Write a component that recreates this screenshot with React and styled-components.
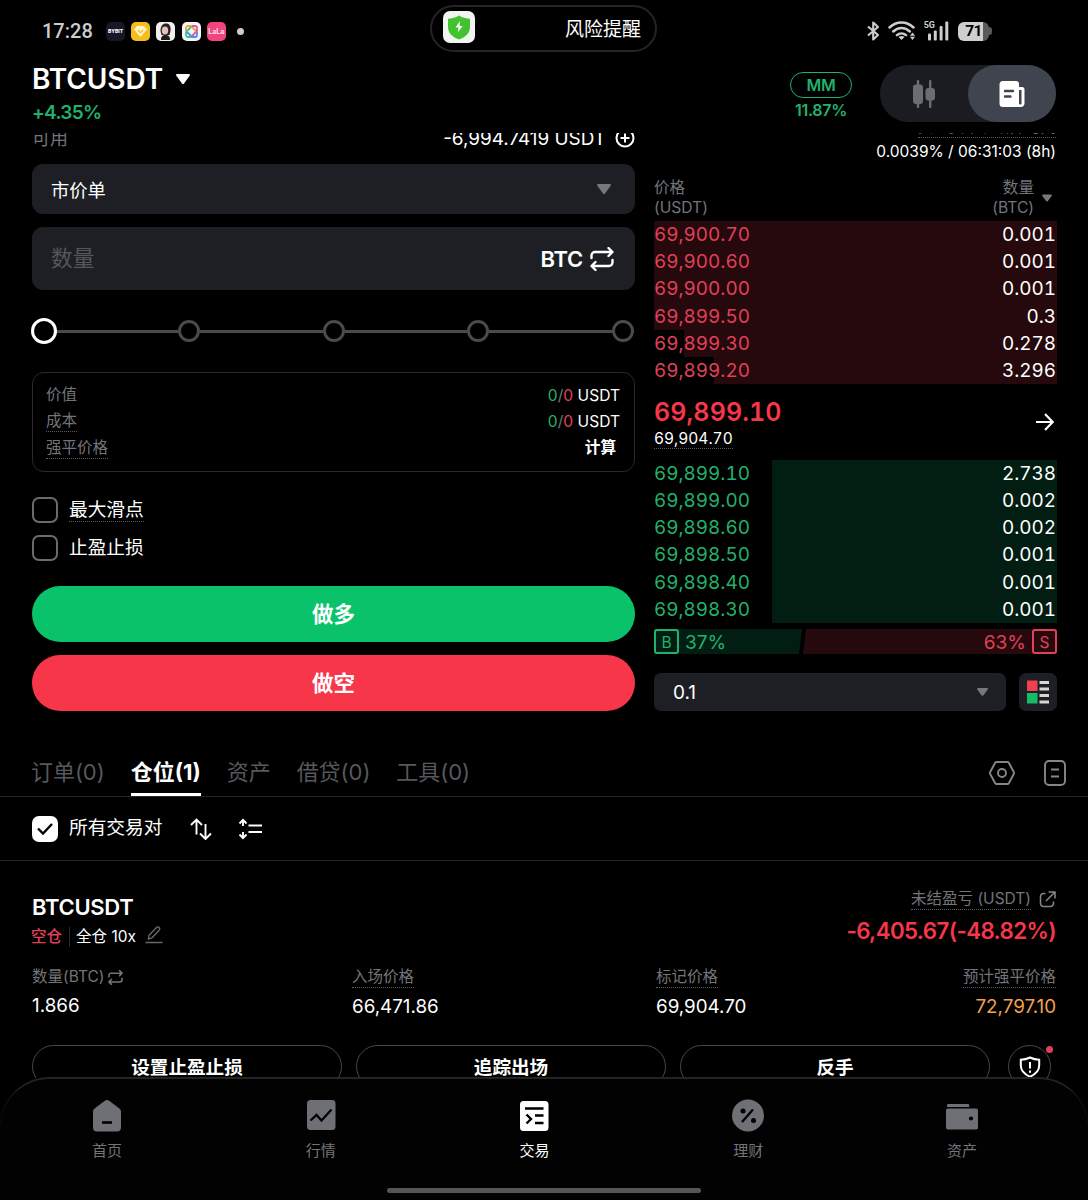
import React from "react";
import styled, { createGlobalStyle } from "styled-components";

const colors = {
  green: "#20b26c",
  buy: "#0ac26a",
  sell: "#f7364a",
  rose: "#e0405a",
  orange: "#f5a04a",
  grey: "#71757a",
  dim: "#55585d",
  field: "#1e1f24",
  line: "#242426",
  askBg: "#25090c",
  bidBg: "#021d11",
};

const GlobalStyle = createGlobalStyle`
  * {
    box-sizing: border-box;
  }

  body {
    margin: 0;
    background: #000;
    color: #fff;
    font-family: Inter, "Noto Sans CJK SC", sans-serif;
  }

  svg {
    display: block;
    flex: none;
  }
`;

const Screen = styled.div`
  width: 1088px;
  height: 1200px;
  display: flex;
  overflow: hidden;
  background: #000;
  flex-direction: column;
`;

/* status bar */

const StatusBar = styled.div`
  height: 57px;
  flex: none;
  display: grid;
  grid-template-columns: 388px 227px 1fr;
  align-items: start;
  padding: 5px 96px 0 42px;
`;

const StatusGroup = styled.div`
  height: 52px;
  display: flex;
  align-items: center;
  justify-content: ${(p) => (p.$end ? "flex-end" : "flex-start")};
`;

const Clock = styled.span`
  width: 64px;
  color: #cdcdcd;
  font: 500 20px/24px Roboto, sans-serif;
`;

const AppTile = styled.span`
  width: 19px;
  height: 19px;
  display: flex;
  margin-right: 6.2px;
  align-items: center;
  justify-content: center;
  border-radius: 5px;
  overflow: hidden;
  color: ${(p) => p.$color || "#fff"};
  background: ${(p) => p.$bg};
  font-size: ${(p) => p.$size || 6}px;
  font-weight: 800;
  line-height: 1;
`;

const MoreDot = styled.span`
  width: 7px;
  height: 7px;
  margin-left: 5px;
  border-radius: 50%;
  background: #cdcdcd;
`;

const Notice = styled.div`
  height: 47px;
  display: flex;
  font-size: 19px;
  align-items: center;
  justify-content: space-between;
  padding: 0 14px 3px 11px;
  border-radius: 24px;
  border: 2px solid #242424;
`;

const Battery = styled.span`
  width: 31px;
  height: 19px;
  display: flex;
  color: #000;
  margin-left: 9px;
  align-items: center;
  justify-content: center;
  border-radius: 6px;
  font: 700 15.5px/19px Roboto, sans-serif;
  letter-spacing: -0.6px;
  background: linear-gradient(90deg, #cfcfcf 25px, #5a5a5a 25px);
`;

const BatteryTip = styled.span`
  width: 3px;
  height: 8px;
  border-radius: 0 4px 4px 0;
  background: #5a5a5a;
`;

const Signal = styled.div`
  display: flex;
  align-items: flex-start;
  color: #cdcdcd;
  margin-left: 8px;
  font: 700 9px/9px Roboto, sans-serif;

  svg {
    margin-left: -8px;
  }
`;

/* header */

const Header = styled.header`
  height: 76px;
  flex: none;
  display: flex;
  padding: 8px 32px 0;
  align-items: flex-start;
`;

const Pair = styled.div`
  flex: 1;
`;

const PairName = styled.div`
  height: 28px;
  display: flex;
  gap: 13px;
  font-size: 28px;
  font-weight: 600;
  align-items: center;
  letter-spacing: -0.1px;
`;

const PairChange = styled.div`
  color: ${colors.green};
  font-size: 19px;
  font-weight: 600;
  margin-top: 8px;
  line-height: 24px;
  letter-spacing: -0.7px;
`;

const Margin = styled.div`
  width: 62px;
  margin-top: 7px;
  display: flex;
  color: ${colors.green};
  font-size: 16px;
  font-weight: 600;
  align-items: center;
  flex-direction: column;
  line-height: 25px;
  white-space: nowrap;
  letter-spacing: -0.3px;
`;

const MarginTag = styled.span`
  width: 62px;
  height: 26px;
  line-height: 25px;
  text-align: center;
  border-radius: 13px;
  border: 1px solid ${colors.green};
`;

const ViewSwitch = styled.div`
  width: 176px;
  height: 57px;
  display: flex;
  margin-left: 28px;
  border-radius: 29px;
  background: #1b1c21;
`;

const ViewOption = styled.span`
  width: 88px;
  height: 57px;
  display: flex;
  align-items: center;
  justify-content: center;
  border-radius: 29px;
  background: ${(p) => (p.$active ? "#3f444f" : "transparent")};
`;

/* trade area */

const Content = styled.main`
  height: 945px;
  flex: none;
  overflow: hidden;
`;

const Trade = styled.section`
  display: flex;
  gap: 19px;
  padding: 0 32px;
`;

const OrderForm = styled.div`
  width: 603px;
`;

const Available = styled.div`
  height: 26px;
  display: flex;
  margin-top: -7px;
  font-size: 18px;
  line-height: 28px;
  align-items: center;
  justify-content: space-between;

  > span:first-child {
    color: ${colors.grey};
  }
`;

const Inline = styled.span`
  display: inline-flex;
  align-items: center;
  gap: ${(p) => p.$gap || 6}px;
`;

const Balance = styled(Inline)`
  font-size: 18.9px;
`;

const Field = styled.div`
  height: ${(p) => p.$height}px;
  flex: ${(p) => (p.$grow ? 1 : "none")};
  display: flex;
  align-items: center;
  justify-content: space-between;
  margin-top: ${(p) => p.$top || 0}px;
  padding: ${(p) => p.$padding};
  font-size: ${(p) => p.$size || 18.3}px;
  border-radius: ${(p) => p.$radius || 11}px;
  background: ${colors.field};
`;

const Placeholder = styled.span`
  color: #55565c;
  font-size: 21.7px;
  padding-bottom: 4px;
`;

const Unit = styled(Inline)`
  font-size: 22px;
  font-weight: 600;
  letter-spacing: -0.3px;
`;

const Slider = styled.div`
  height: 26px;
  display: flex;
  margin-top: 28px;
  align-items: center;
  padding: 0 1px 0 1px;
`;

const Stop = styled.span`
  flex: none;
  width: ${(p) => (p.$active ? 26 : 22)}px;
  height: ${(p) => (p.$active ? 26 : 22)}px;
  margin: ${(p) => (p.$active ? "0 -2px" : 0)};
  border-radius: 50%;
  border: 3px solid ${(p) => (p.$active ? "#fff" : "#4b4b4d")};
  background: #000;
  z-index: 1;
`;

const Track = styled.span`
  flex: 1;
  height: 3px;
  background: #4b4b4d;
`;

const Summary = styled.div`
  height: 100px;
  margin-top: 28px;
  padding: 9px 14px 0 13px;
  border-radius: 12px;
  border: 1px solid #2a2a2c;
`;

const SummaryRow = styled.div`
  height: 26.5px;
  display: flex;
  font-size: 15.6px;
  line-height: 24px;
  align-items: center;
  justify-content: space-between;
`;

const SummaryValue = styled.span`
  font-weight: ${(p) => (p.$strong ? 600 : 400)};
  padding: ${(p) => (p.$strong ? "0 4px 0 0" : "1px 0 0")};
  color: ${(p) => p.$color || "#fff"};
`;

const Hint = styled.span`
  display: inline-block;
  line-height: 20px;
  white-space: nowrap;
  color: ${(p) => p.$color || colors.grey};
  font-size: ${(p) => p.$size || 15.5}px;
  border-bottom: 1px dotted ${(p) => (p.$plain ? "transparent" : "#5a5c60")};
`;

const Check = styled.div`
  height: 26px;
  display: flex;
  gap: 11px;
  font-size: 18.6px;
  align-items: center;
  margin-top: ${(p) => p.$top || 0}px;
`;

const CheckText = styled(Hint)`
  color: #fff;
  font-size: 18.7px;
  line-height: 22px;
`;

const Box = styled.span`
  width: 26px;
  height: 26px;
  flex: none;
  display: flex;
  align-items: center;
  justify-content: center;
  border-radius: 7px;
  border: 2px solid ${(p) => (p.$checked ? "#fff" : "#6a6b6f")};
  background: ${(p) => (p.$checked ? "#fff" : "transparent")};
`;

const SideButton = styled.div`
  height: 56px;
  margin-top: ${(p) => p.$top}px;
  font-size: 21.5px;
  font-weight: 700;
  line-height: 56px;
  text-align: center;
  border-radius: 28px;
  background: ${(p) => p.$bg};
`;

/* order book */

const Book = styled.div`
  width: 402px;
`;

const Funding = styled.div`
  display: flex;
  margin-top: -16px;
  flex-direction: column;
  align-items: flex-end;
  font-size: 15.5px;
  line-height: 28px;
`;

const BookHead = styled.div`
  display: flex;
  margin: 12px 0 3px;
  color: ${colors.grey};
  font-size: 15.6px;
  line-height: 20px;
  align-items: center;
  justify-content: space-between;
`;

const BookHeadRight = styled(Inline)`
  text-align: right;
  padding-right: 4px;
`;

const Level = styled.div`
  height: 27.2px;
  display: flex;
  font-size: 18.9px;
  line-height: 28.4px;
  margin-right: -1px;
  padding-right: 1px;
  justify-content: space-between;
  font-variant-numeric: tabular-nums;

  > span:first-child {
    color: ${(p) => (p.$side === "ask" ? colors.rose : colors.green)};
  }
`;

const LastPrice = styled.div`
  height: 75.8px;
  display: flex;
  padding: 12px 2px 0 0;
  justify-content: space-between;
`;

const Prices = styled.div`
  display: flex;
  flex-direction: column;
  align-items: flex-start;
`;

const Last = styled.div`
  color: ${colors.sell};
  font-size: 25px;
  font-weight: 600;
  line-height: 32px;
  letter-spacing: 0.1px;
  font-variant-numeric: tabular-nums;
`;

const MarkPrice = styled(Hint)`
  color: #fff;
  line-height: 19px;
  padding-top: 1px;
  font-variant-numeric: tabular-nums;
`;

const Expand = styled.span`
  padding-top: 16px;
`;

const Ratio = styled.div`
  height: 25px;
  display: flex;
  margin: 6px -1px 0 0;
  font-size: 19px;
`;

const RatioSide = styled.div`
  flex: ${(p) => p.$flex};
  display: flex;
  gap: 6px;
  align-items: center;
  color: ${(p) => (p.$buy ? colors.green : colors.rose)};
  background: ${(p) => (p.$buy ? colors.bidBg : colors.askBg)};
  justify-content: ${(p) => (p.$buy ? "flex-start" : "flex-end")};
  clip-path: ${(p) =>
    p.$buy
      ? "polygon(0 0, 100% 0, calc(100% - 3px) 100%, 0 100%)"
      : "polygon(4px 0, 100% 0, 100% 100%, 1px 100%)"};
`;

const RatioText = styled.span`
  line-height: 25px;
  padding-top: 2px;
`;

const SideTag = styled.span`
  width: 25px;
  height: 25px;
  font-size: 15.5px;
  line-height: 23px;
  text-align: center;
  border-radius: 3px;
  border: 2px solid currentColor;
`;

const Precision = styled.div`
  display: flex;
  gap: 13px;
  margin-top: 19px;
`;

const LayoutButton = styled.span`
  width: 38px;
  height: 38px;
  display: flex;
  margin-right: -1px;
  border-radius: 7px;
  align-items: center;
  justify-content: center;
  background: ${colors.field};
`;

/* positions */

const Tabs = styled.nav`
  height: 50px;
  display: flex;
  gap: 26px;
  margin-top: 36px;
  padding: 0 22px 0 31px;
  border-bottom: 1px solid ${colors.line};
`;

const Tab = styled.span`
  color: ${(p) => (p.$active ? "#fff" : colors.dim)};
  font-size: 22px;
  font-weight: ${(p) => (p.$active ? 700 : 400)};
  letter-spacing: ${(p) => (p.$active ? 0 : -0.05)}px;
  line-height: 50px;
  box-shadow: ${(p) => (p.$active ? "inset 0 -3px #fff" : "none")};
`;

const TabTools = styled.span`
  display: flex;
  gap: 29px;
  margin-left: auto;
  align-items: center;
  padding-top: 3px;
`;

const Filters = styled.div`
  height: 64px;
  display: flex;
  gap: 26px;
  padding: 0 32px;
  align-items: center;
  border-bottom: 1px solid ${colors.line};

  > div {
    margin-right: 2px;
  }
`;

const Position = styled.section`
  padding: 28px 32px 0;
`;

const PositionHead = styled.div`
  height: 78px;
  display: flex;
  justify-content: space-between;
`;

const Symbol = styled.div`
  font-size: 22px;
  font-weight: 600;
  margin-top: 4px;
  line-height: 28px;
  letter-spacing: -0.3px;
`;

const Mode = styled.div`
  display: flex;
  font-size: 15.5px;
  line-height: 20px;
  margin: 6px 0 0 -1px;
  align-items: center;

  svg {
    margin-top: -5px;
  }
`;

const Short = styled.span`
  color: ${colors.rose};
  font-weight: 500;
  padding-right: 7px;
  margin-right: 6px;
  border-right: 1px solid #2a2a2c;
`;

const Pnl = styled.div`
  display: flex;
  flex-direction: column;
  align-items: flex-end;
`;

const PnlValue = styled.div`
  color: ${colors.sell};
  font-size: 22.3px;
  font-weight: 600;
  line-height: 28px;
  margin-top: 7px;
  letter-spacing: -0.6px;
`;

const Stats = styled.div`
  display: grid;
  grid-template-columns: 320px 304px 1fr auto;
`;

const Stat = styled.div`
  display: flex;
  flex-direction: column;
  align-items: ${(p) => (p.$end ? "flex-end" : "flex-start")};
`;

const StatValue = styled.div`
  color: ${(p) => p.$color || "#fff"};
  font-size: 18.8px;
  line-height: 24px;
  margin-top: ${(p) => p.$top || 7}px;
`;

const Actions = styled.div`
  display: flex;
  gap: 14px;
  margin-top: 26px;
`;

const Action = styled.span`
  width: 310px;
  height: 43px;
  font-size: 18.6px;
  font-weight: 600;
  line-height: 42px;
  text-align: center;
  border-radius: 22px;
  border: 1px solid #48494b;
`;

const Guard = styled.span`
  width: 43px;
  height: 43px;
  display: flex;
  margin-left: 4px;
  position: relative;
  align-items: center;
  justify-content: center;
  border-radius: 50%;
  border: 1px solid #48494b;
`;

const Badge = styled.span`
  top: 0;
  right: -3px;
  width: 7px;
  height: 7px;
  position: absolute;
  border-radius: 50%;
  background: ${colors.rose};
`;

/* bottom navigation */

const BottomNav = styled.nav`
  height: 122px;
  margin-top: -1px;
  position: relative;
  background: #020202;
  border-top: 2px solid #242424;
  border-radius: 50px 50px 0 0;
`;

const NavItems = styled.div`
  display: flex;
  padding: 20px 19px 0 0;
`;

const NavItem = styled.span`
  flex: 1;
  display: flex;
  font-size: 15px;
  line-height: 20px;
  align-items: center;
  flex-direction: column;
  gap: 8px;
  color: ${(p) => (p.$active ? "#fff" : colors.grey)};
`;

const HomeBar = styled.div`
  width: 314px;
  height: 5px;
  margin: 27px auto 0;
  border-radius: 3px;
  background: #555;
`;

/* icons */

const Caret = ({ color = "#77787c", w = 14, h = 10 }) => (
  <svg width={w} height={h} viewBox="0 0 14 10">
    <path d="M1.2 0h11.6c1 0 1.5 1 .9 1.8L8 9.4c-.5.7-1.500.7-2 0L.3 1.800C-.3 1 .2 0 1.200 0z" fill={color} />
  </svg>
);

const Swap = ({ size = 24, color = "#fff", width = 2.4 }) => (
  <svg width={size} height={size} viewBox="0 0 24 24" fill="none" stroke={color} strokeWidth={width} strokeLinecap="round" strokeLinejoin="round">
    <path d="M1.500 11V8.500a3.500 3.500 0 0 1 3.500-3.500h17M18.500 1l4 4-4 4M22.500 13v2.500a3.500 3.500 0 0 1-3.500 3.500H2M5.500 15l-4 4 4 4" />
  </svg>
);

const PlusCircle = () => (
  <svg width="20" height="20" viewBox="0 0 20 20" fill="none" stroke="#fff" strokeWidth="2">
    <circle cx="10" cy="9" r="8.500" />
    <path d="M10 4.500v9M5.500 9h9" />
  </svg>
);

const Bluetooth = () => (
  <svg width="13" height="20" viewBox="0 0 13 20" fill="none" stroke="#cdcdcd" strokeWidth="2.100" strokeLinejoin="round">
    <path d="M1 5.500l10 8.500-4.800 4.500v-17L11 6 1 14.500" />
  </svg>
);

const Wifi = () => (
  <svg width="28" height="20" viewBox="0 0 28 20" fill="none" stroke="#cdcdcd" strokeWidth="2.500" strokeLinecap="round">
    <path d="M1.500 6.500C8.500-.2 18.500-.2 25.500 6.500M5.200 10.500c5-4.600 11.600-4.600 16.600 0M9 14.200c2.600-2.400 6.400-2.400 9 0" />
    <path d="M13.500 19l-3-3c1.800-1.500 4.200-1.500 6 0z" fill="#cdcdcd" stroke="none" />
    <path d="M24.500 11.500l2.600 3.200h-5.200zM24.500 19l2.600-3.200h-5.200z" fill="#cdcdcd" stroke="none" />
  </svg>
);

const Bars = () => (
  <svg width="22" height="20" viewBox="0 0 22 20" fill="#cdcdcd">
    <rect x="1" y="12.500" width="3" height="7" rx="1" />
    <rect x="6.800" y="9.500" width="3" height="10" rx="1" />
    <rect x="12.600" y="5" width="3" height="14.500" rx="1" />
    <rect x="18.300" y="0.500" width="3" height="19" rx="1" />
  </svg>
);

const GreenShield = () => (
  <svg width="32" height="32" viewBox="0 0 32 32">
    <rect width="32" height="32" rx="7" fill="#f1f5f0" />
    <path d="M16 4.500c3.500 2.200 7 3 11 3.200V16c0 6-4.500 10.200-11 12.500C9.500 26.200 5 22 5 16V7.700c4-.2 7.500-1 11-3.200z" fill="#43c22f" />
    <path d="M17 10l-4.400 6.500h3l-.7 4.700 4.700-6.200h-3.100z" fill="#fff" />
  </svg>
);

const Candles = () => (
  <svg width="24" height="28" viewBox="0 0 24 28" fill="#6c6d71">
    <rect x="1" y="4.500" width="10" height="19.500" rx="3" />
    <rect x="4.800" y="0" width="2.400" height="28" rx="1" />
    <rect x="13.500" y="8" width="9.500" height="12.500" rx="3" />
    <rect x="17" y="0" width="2.400" height="28" rx="1" />
  </svg>
);

const OrderView = () => (
  <svg width="26" height="26" viewBox="0 0 26 26">
    <path d="M4 0h13a3 3 0 0 1 3 3v3h3a2.500 2.500 0 0 1 2.500 2.500V22a4 4 0 0 1-4 4H4a3.500 3.500 0 0 1-3.500-3.500v-19A3.500 3.500 0 0 1 4 0z" fill="#fff" />
    <path d="M6 10h8M6 15.500h5.500" stroke="#3f444f" strokeWidth="2.400" strokeLinecap="round" />
    <path d="M20 9h2.500v13.200c0 .8-.5 1.300-1.200 1.300S20 23 20 22.200z" fill="#3f444f" />
  </svg>
);

const Arrow = () => (
  <svg width="18" height="20" viewBox="0 0 18 20" fill="none" stroke="#fff" strokeWidth="2.200">
    <path d="M0 10h16.500M9 2l7.700 8L9 18" />
  </svg>
);

const BookLayout = () => (
  <svg width="24" height="24" viewBox="0 0 24 24">
    <path d="M1 0.500h10.500V11H1z" fill="#ef3f50" />
    <path d="M1 13h10.500v10.500H1z" fill="#16bb6a" />
    <path d="M13.500 2.500H23M13.500 9H23M13.500 15.500H23M13.500 22H23" stroke="#d6d6d6" strokeWidth="3" />
  </svg>
);

const Hexagon = () => (
  <svg width="26" height="24" viewBox="0 0 26 24" fill="none" stroke="#85868a" strokeWidth="1.900" strokeLinejoin="round">
    <path d="M7.600 1h10.800c.6 0 1.100.3 1.400.8l5 9.200c.3.600.3 1.400 0 2l-5 9.200c-.3.500-.8.8-1.400.8H7.600c-.6 0-1.100-.3-1.400-.8l-5-9.200c-.3-.6-.3-1.400 0-2l5-9.200c.3-.5.8-.8 1.400-.8z" />
    <circle cx="13" cy="12" r="4" />
  </svg>
);

const Sheet = () => (
  <svg width="22" height="26" viewBox="0 0 22 26" fill="none" stroke="#85868a" strokeWidth="1.900">
    <rect x="1" y="1" width="20" height="24" rx="4" />
    <path d="M7 9.500h8M7 16.500h8" />
  </svg>
);

const Tick = () => (
  <svg width="18" height="14" viewBox="0 0 18 14" fill="none" stroke="#000" strokeWidth="2.400">
    <path d="M2 6.500l5 5L16 2" />
  </svg>
);

const Sort = () => (
  <svg width="22" height="22" viewBox="0 0 22 22" fill="none" stroke="#fff" strokeWidth="1.900">
    <path d="M6.500 16.500V1.500M1 7l5.500-5.500L12 7M15.500 6v15M10 15.500l5.500 5.500 5.500-5.500" />
  </svg>
);

const Density = () => (
  <svg width="24" height="22" viewBox="0 0 24 22" fill="none" stroke="#fff" strokeWidth="1.900">
    <path d="M5 8V2M1.500 5.500L5 1.800l3.500 3.700M5 14v6M1.500 16.500L5 20.200l3.500-3.700M10.500 7.500H24M10.500 14H24" />
  </svg>
);

const Pencil = () => (
  <svg width="18" height="18" viewBox="0 0 18 18" fill="none" stroke="#66686c" strokeWidth="1.400">
    <path d="M3.500 13l.5-3.800L11.500 1.500c.8-.8 2-.8 2.700 0 .7.800.7 1.900 0 2.700L7 11.800zM0.500 16.500h17" />
  </svg>
);

const Share = () => (
  <svg width="17" height="17" viewBox="0 0 17 17" fill="none" stroke="#85868a" strokeWidth="1.500">
    <path d="M6.500 2.500h-2a3 3 0 0 0-3 3v7a3 3 0 0 0 3 3h7a3 3 0 0 0 3-3v-2M7 10l8.500-8.500M9.500 1h6.500v6.500" />
  </svg>
);

const GuardShield = () => (
  <svg width="22" height="22" viewBox="0 0 22 22" fill="none" stroke="#fff" strokeWidth="2">
    <path d="M11 1.500c3 1.500 6 2.200 9.200 2.300v5.700c0 5-3.200 8.500-9.200 11.300-6-2.800-9.200-6.300-9.200-11.300V3.800C5 3.700 8 3 11 1.500z" />
    <path d="M11 6v6.500M11 14.500v2.200" />
  </svg>
);

const HomeIcon = () => (
  <svg width="30" height="34" viewBox="0 0 30 34">
    <path d="M13.200 1.600a3 3 0 0 1 3.600 0l10.600 7.800A4 4 0 0 1 29 12.500V28.500a4 4 0 0 1-4 4H5a4 4 0 0 1-4-4V12.500a4 4 0 0 1 1.600-3.100z" fill="#6e7076" />
    <path d="M10 23.500h10" stroke="#000" strokeWidth="2.600" />
  </svg>
);

const MarketIcon = () => (
  <svg width="30" height="34" viewBox="0 0 30 34">
    <rect x="1" y="1" width="28.500" height="30" rx="3.500" fill="#6e7076" />
    <path d="M4.500 21.500l6-5.500 5 5.500L25.500 10.500" fill="none" stroke="#000" strokeWidth="2.300" />
  </svg>
);

const TradeIcon = () => (
  <svg width="30" height="34" viewBox="0 0 30 34">
    <rect x="1" y="2" width="28.500" height="30" rx="3.500" fill="#fff" />
    <path d="M6 9.500h18.500M16 16.500h8.500M16 24h8.500M7.500 15.500l4.500 4.500-4.500 4.500" fill="none" stroke="#000" strokeWidth="2.400" />
  </svg>
);

const EarnIcon = () => (
  <svg width="32" height="34" viewBox="0 0 32 34">
    <circle cx="16" cy="16.500" r="16" fill="#6e7076" />
    <circle cx="11" cy="12" r="2.500" />
    <circle cx="21.500" cy="21.500" r="2.500" />
    <path d="M10 23L21 10.500" stroke="#000" strokeWidth="2.300" />
  </svg>
);

const WalletIcon = () => (
  <svg width="34" height="34" viewBox="0 0 34 34">
    <path d="M3 5h20a1.200 1.200 0 0 1 1.200 1.200V8H2V6.200A1.200 1.200 0 0 1 3 5z" fill="#6e7076" />
    <rect x="1" y="9.500" width="32" height="21" rx="1.800" fill="#6e7076" />
    <circle cx="26" cy="19.500" r="2.100" />
  </svg>
);

/* data */

const asks = [
  ["69,900.70", "0.001", 0],
  ["69,900.60", "0.001", 0],
  ["69,900.00", "0.001", 0],
  ["69,899.50", "0.3", 0],
  ["69,899.30", "0.278", 30],
  ["69,899.20", "3.296", 60],
];

const bids = [
  ["69,899.10", "2.738", 118],
  ["69,899.00", "0.002", 118],
  ["69,898.60", "0.002", 118],
  ["69,898.50", "0.001", 118],
  ["69,898.40", "0.001", 118],
  ["69,898.30", "0.001", 118],
];

const tabs = ["订单(0)", "仓位(1)", "资产", "借贷(0)", "工具(0)"];

const navItems = [
  ["首页", HomeIcon],
  ["行情", MarketIcon],
  ["交易", TradeIcon],
  ["理财", EarnIcon],
  ["资产", WalletIcon],
];

const Levels = ({ side, rows }) =>
  rows.map(([price, size, start]) => {
    const fill = side === "ask" ? colors.askBg : colors.bidBg;
    return (
      <Level
        key={price}
        $side={side}
        style={{ background: `linear-gradient(90deg, transparent ${start}px, ${fill} ${start}px)` }}
      >
        <span>{price}</span>
        <span>{size}</span>
      </Level>
    );
  });

const ZeroPair = () => (
  <SummaryValue>
    <SummaryValue $color={colors.green}>0</SummaryValue>
    <SummaryValue $color={colors.grey}>/</SummaryValue>
    <SummaryValue $color={colors.rose}>0</SummaryValue> USDT
  </SummaryValue>
);

const App = () => (
  <Screen>
    <GlobalStyle />
    <StatusBar>
      <StatusGroup>
        <Clock>17:28</Clock>
        <AppTile $bg="#171827" $size={5}>BYBIT</AppTile>
        <AppTile $bg="#f4bd1d">
          <svg width="13" height="11" viewBox="0 0 13 11">
            <path d="M3 0h7l3 3.500L6.500 11 0 3.500z" fill="#fff3c8" />
            <path d="M3.800 4l2.700 2.700L9.200 4" fill="none" stroke="#f4bd1d" strokeWidth="1.300" />
          </svg>
        </AppTile>
        <AppTile $bg="#f2f0ef">
          <svg width="19" height="19" viewBox="0 0 19 19">
            <path d="M4.500 9c0-5 2-7.500 5.500-7.500S15 4 14.500 9l-1 4h-8z" fill="#2b2022" />
            <ellipse cx="9" cy="8.500" rx="3.200" ry="4" fill="#e8c3b5" />
            <path d="M5 18c0-4 2-5 4.500-5s4.500 1 4.500 5z" fill="#1d1a1c" />
          </svg>
        </AppTile>
        <AppTile $bg="#f6f6fa">
          <svg width="15" height="15" viewBox="0 0 15 15" fill="none" strokeWidth="1.800">
            <path d="M2 7V4a2 2 0 0 1 2-2h3l5 5" stroke="#f0a03c" />
            <path d="M8 2h3a2 2 0 0 1 2 2v3l-5 5" stroke="#e2559c" />
            <path d="M13 8v3a2 2 0 0 1-2 2H8L3 8" stroke="#4c8df0" />
            <path d="M7 13H4a2 2 0 0 1-2-2V8l5-5" stroke="#45c08a" />
          </svg>
        </AppTile>
        <AppTile $bg="#f0457f" $color="#ffd3e2" $size={7}>LaLa</AppTile>
        <MoreDot />
      </StatusGroup>
      <Notice>
        <GreenShield />
        <span>风险提醒</span>
      </Notice>
      <StatusGroup $end>
        <Inline $gap={8}>
          <Bluetooth />
          <Wifi />
        </Inline>
        <Signal>
          5G
          <Bars />
        </Signal>
        <Battery>71</Battery>
        <BatteryTip />
      </StatusGroup>
    </StatusBar>

    <Header>
      <Pair>
        <PairName>
          BTCUSDT
          <Caret color="#fff" />
        </PairName>
        <PairChange>+4.35%</PairChange>
      </Pair>
      <Margin>
        <MarginTag>MM</MarginTag>
        11.87%
      </Margin>
      <ViewSwitch>
        <ViewOption>
          <Candles />
        </ViewOption>
        <ViewOption $active>
          <OrderView />
        </ViewOption>
      </ViewSwitch>
    </Header>

    <Content>
      <Trade>
        <OrderForm>
          <Available>
            <span>可用</span>
            <Balance $gap={9}>
              -6,994.7419 USDT
              <PlusCircle />
            </Balance>
          </Available>
          <Field $height={50} $top={12} $padding="0 24px 0 19px">
            市价单
            <Caret />
          </Field>
          <Field $height={63} $top={13} $padding="0 21px 0 19px">
            <Placeholder>数量</Placeholder>
            <Unit $gap={7}>
              BTC
              <Swap />
            </Unit>
          </Field>
          <Slider>
            <Stop $active />
            {[25, 50, 75, 100].map((n) => (
              <React.Fragment key={n}>
                <Track />
                <Stop />
              </React.Fragment>
            ))}
          </Slider>
          <Summary>
            <SummaryRow>
              <Hint $plain>价值</Hint>
              <ZeroPair />
            </SummaryRow>
            <SummaryRow>
              <Hint>成本</Hint>
              <ZeroPair />
            </SummaryRow>
            <SummaryRow>
              <Hint>强平价格</Hint>
              <SummaryValue $strong>计算</SummaryValue>
            </SummaryRow>
          </Summary>
          <Check $top={25}>
            <Box />
            <CheckText>最大滑点</CheckText>
          </Check>
          <Check $top={12}>
            <Box />
            <CheckText $plain>止盈止损</CheckText>
          </Check>
          <SideButton $top={25} $bg={colors.buy}>做多</SideButton>
          <SideButton $top={13} $bg={colors.sell}>做空</SideButton>
        </OrderForm>

        <Book>
          <Funding>
            <Hint>资金费率 / 结算时间</Hint>
            <span>0.0039% / 06:31:03 (8h)</span>
          </Funding>
          <BookHead>
            <span>
              价格
              <br />
              (USDT)
            </span>
            <BookHeadRight $gap={8}>
              <span>
                数量
                <br />
                (BTC)
              </span>
              <Caret w={10} h={8} />
            </BookHeadRight>
          </BookHead>
          <Levels side="ask" rows={asks} />
          <LastPrice>
            <Prices>
              <Last>69,899.10</Last>
              <MarkPrice>69,904.70</MarkPrice>
            </Prices>
            <Expand>
              <Arrow />
            </Expand>
          </LastPrice>
          <Levels side="bid" rows={bids} />
          <Ratio>
            <RatioSide $buy $flex="0 0 148px">
              <SideTag>B</SideTag>
              <RatioText>37%</RatioText>
            </RatioSide>
            <RatioSide $flex="1">
              <RatioText>63%</RatioText>
              <SideTag>S</SideTag>
            </RatioSide>
          </Ratio>
          <Precision>
            <Field $height={38} $grow $size={19} $radius={7} $padding="0 18px 0 19px">
              0.1
              <Caret w={11} h={8} />
            </Field>
            <LayoutButton>
              <BookLayout />
            </LayoutButton>
          </Precision>
        </Book>
      </Trade>

      <Tabs>
        {tabs.map((tab, i) => (
          <Tab key={tab} $active={i === 1}>
            {tab}
          </Tab>
        ))}
        <TabTools>
          <Hexagon />
          <Sheet />
        </TabTools>
      </Tabs>
      <Filters>
        <Check>
          <Box $checked>
            <Tick />
          </Box>
          <CheckText $plain>所有交易对</CheckText>
        </Check>
        <Sort />
        <Density />
      </Filters>

      <Position>
        <PositionHead>
          <div>
            <Symbol>BTCUSDT</Symbol>
            <Mode>
              <Short>空仓</Short>
              <Inline $gap={9}>
                全仓 10x
                <Pencil />
              </Inline>
            </Mode>
          </div>
          <Pnl>
            <Inline $gap={8}>
              <Hint>未结盈亏 (USDT)</Hint>
              <Share />
            </Inline>
            <PnlValue>-6,405.67(-48.82%)</PnlValue>
          </Pnl>
        </PositionHead>
        <Stats>
          <Stat>
            <Inline $gap={4}>
              <Hint $plain>数量(BTC)</Hint>
              <Swap size={15} color={colors.grey} width={2.4} />
            </Inline>
            <StatValue $top={6}>1.866</StatValue>
          </Stat>
          <Stat>
            <Hint>入场价格</Hint>
            <StatValue>66,471.86</StatValue>
          </Stat>
          <Stat>
            <Hint>标记价格</Hint>
            <StatValue>69,904.70</StatValue>
          </Stat>
          <Stat $end>
            <Hint>预计强平价格</Hint>
            <StatValue $color={colors.orange}>72,797.10</StatValue>
          </Stat>
        </Stats>
        <Actions>
          <Action>设置止盈止损</Action>
          <Action>追踪出场</Action>
          <Action>反手</Action>
          <Guard>
            <GuardShield />
            <Badge />
          </Guard>
        </Actions>
      </Position>
    </Content>

    <BottomNav>
      <NavItems>
        {navItems.map(([label, Icon], i) => (
          <NavItem key={label} $active={i === 2}>
            <Icon />
            {label}
          </NavItem>
        ))}
      </NavItems>
      <HomeBar />
    </BottomNav>
  </Screen>
);

export default App;
